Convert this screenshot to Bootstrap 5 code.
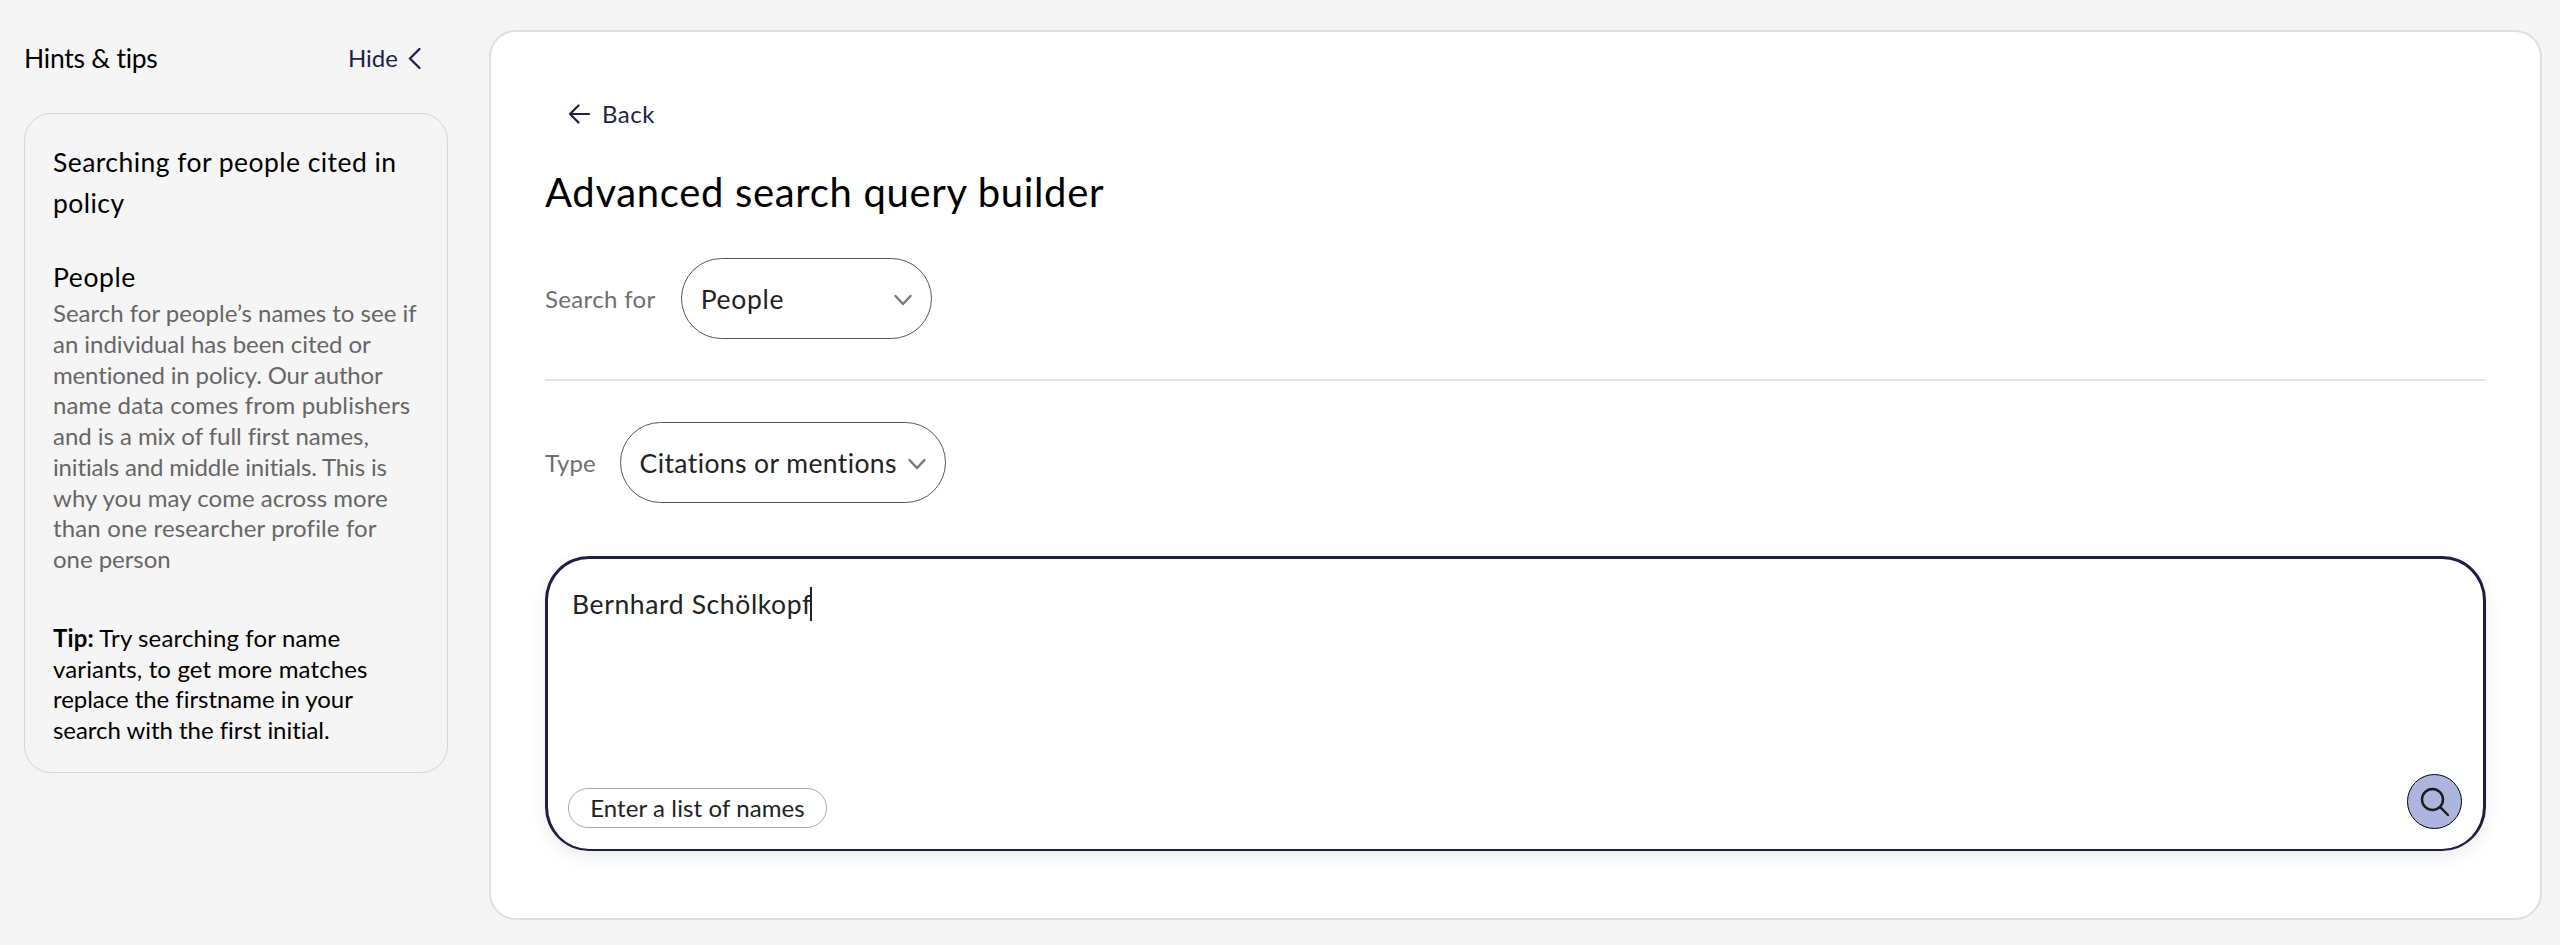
<!DOCTYPE html>
<html lang="en">
<head>
<meta charset="utf-8">
<meta name="viewport" content="width=device-width, initial-scale=1">
<title>Advanced search query builder</title>
<link href="https://cdn.jsdelivr.net/npm/bootstrap@5.3.0/dist/css/bootstrap.min.css" rel="stylesheet">
<style>
body{background:#f5f5f5;color:#000;font-family:Lato,"Liberation Sans",sans-serif;font-size:24px;height:945px;overflow:hidden;font-variant-ligatures:none}
.navy{color:#1d1f45}
.line{display:block;width:max-content;white-space:nowrap}
.side{width:489px;padding-left:24px}
.side-head{height:113px;padding:3px 67px 0 0}
.side-title{letter-spacing:-.25px!important}
.heading{font-size:26.5px;line-height:41px;letter-spacing:.45px}
.tips{width:424px;height:660px;border:1px solid #d6d6d6;border-radius:27px;padding:28px 0 0 28px}
.people{margin-top:33px;letter-spacing:.6px}
.copy{line-height:30.75px;color:#666}
.tip{margin-top:48px;line-height:30.75px}
.ls-0{letter-spacing:-.04px}
.ls-n{letter-spacing:-.15px}
.ls-1{letter-spacing:.04px}
.ls-2{letter-spacing:.14px}
.panel{width:2053px;height:890px;margin-top:30px;background:#fff;border:2px solid #dfdfdf;border-radius:27px;padding:62px 54px 0 54px}
.back{height:40px;padding-left:23px;gap:11px;letter-spacing:.5px}
.title{font-size:40px;line-height:50px;letter-spacing:.67px;margin:33px 0 41px}
.lbl{color:#6e6e6e;line-height:30px}
.lbl-for{letter-spacing:.35px}
.pick{height:81px;border:1px solid #555;border-radius:41px;color:#222;font-size:26.5px;padding:2px 18px 0 19px;background:#fff}
.pick-for{width:251px;margin-left:25px;letter-spacing:.7px}
.pick-type{width:326px;margin-left:24px;letter-spacing:.4px}
.rule{height:2px;background:#e3e3e3;margin:40px 0 41px}
.query{height:295px;border:3px solid #1d1f40;border-bottom-width:2px;border-radius:44px;box-shadow:0 6px 18px rgba(0,0,0,.08);margin-top:53px;padding:27px 21px 20px 24px}
.entry{font-size:26.5px;line-height:36px;letter-spacing:.62px;color:#222}
.caret{width:1.5px;height:34px;margin-left:-1.5px;background:#222}
.names{height:40px;width:259px;border:1px solid #aaa;border-radius:20px;background:#fff;color:#222;letter-spacing:.1px;margin:0 0 1px -4px;padding:0}
.go{width:55px;height:55px;border:1.5px solid #000;border-radius:50%;background:#adb4de;padding:0}
</style>
</head>
<body>
<div class="d-flex">
  <aside class="side">
    <div class="side-head d-flex align-items-center justify-content-between">
      <span class="line heading side-title">Hints &amp; tips</span>
      <span class="navy d-flex align-items-center">
        <span>Hide</span>
        <svg class="ms-2" width="16" height="24" viewBox="0 0 16 24" fill="none" stroke="currentColor" stroke-width="2.200" stroke-linecap="round"><path d="M13.500 3 4 12.500l9.500 9.500"/></svg>
      </span>
    </div>
    <section class="tips">
      <div class="heading"><span class="line">Searching for people cited in</span><span class="line">policy</span></div>
      <div class="heading people">People</div>
      <div class="copy">
        <span class="line">Search for people’s names to see if</span>
        <span class="line ls-0">an individual has been cited or</span>
        <span class="line ls-n">mentioned in policy. Our author</span>
        <span class="line ls-2">name data comes from publishers</span>
        <span class="line ls-0">and is a mix of full first names,</span>
        <span class="line ls-n">initials and middle initials. This is</span>
        <span class="line ls-1">why you may come across more</span>
        <span class="line ls-2">than one researcher profile for</span>
        <span class="line ls-0">one person</span>
      </div>
      <div class="tip">
        <span class="line ls-2"><b>Tip:</b> Try searching for name</span>
        <span class="line ls-2">variants, to get more matches</span>
        <span class="line ls-0">replace the firstname in your</span>
        <span class="line ls-0">search with the first initial.</span>
      </div>
    </section>
  </aside>
  <main class="panel">
    <div class="back navy d-flex align-items-center">
      <svg width="23" height="22" viewBox="0 0 23 22" fill="none" stroke="currentColor" stroke-width="2.200" stroke-linecap="round" stroke-linejoin="round"><path d="M21 11H2M10.500 2.500 2 11l8.500 8.500"/></svg>
      <span>Back</span>
    </div>
    <h1 class="title fw-normal">Advanced search query builder</h1>
    <div class="d-flex align-items-center">
      <span class="lbl lbl-for">Search for</span>
      <button class="pick pick-for d-flex align-items-center justify-content-between">
        <span>People</span>
        <svg width="20" height="14" viewBox="0 0 20 14" fill="none" stroke="#777" stroke-width="2.400" stroke-linecap="round" stroke-linejoin="round"><path d="m2.500 3 7.500 8 7.500-8"/></svg>
      </button>
    </div>
    <div class="rule"></div>
    <div class="d-flex align-items-center">
      <span class="lbl">Type</span>
      <button class="pick pick-type d-flex align-items-center justify-content-between">
        <span>Citations or mentions</span>
        <svg width="20" height="14" viewBox="0 0 20 14" fill="none" stroke="#777" stroke-width="2.400" stroke-linecap="round" stroke-linejoin="round"><path d="m2.500 3 7.500 8 7.500-8"/></svg>
      </button>
    </div>
    <div class="query d-flex flex-column justify-content-between">
      <div class="entry d-flex align-items-center"><span>Bernhard Schölkopf</span><span class="caret"></span></div>
      <div class="d-flex align-items-end justify-content-between">
        <button class="names">Enter a list of names</button>
        <button class="go d-flex align-items-center justify-content-center" aria-label="Search">
          <svg width="30" height="30" viewBox="0 0 30 30" fill="none" stroke="#1c1c1c" stroke-width="2.400" stroke-linecap="round"><circle cx="12.500" cy="12.500" r="10.500"/><path d="m20.200 20.200 7.800 7.800"/></svg>
        </button>
      </div>
    </div>
  </main>
</div>
<script src="https://cdn.jsdelivr.net/npm/bootstrap@5.3.0/dist/js/bootstrap.bundle.min.js"></script>
</body>
</html>
